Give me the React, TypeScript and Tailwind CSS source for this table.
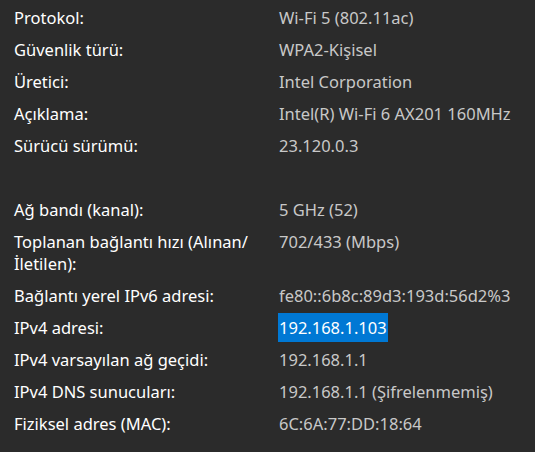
import React from "react";

type Row = { label: string[]; value?: string; selected?: boolean };

const rows: Row[] = [
  { label: ["Protokol:"], value: "Wi-Fi 5 (802.11ac)" },
  { label: ["Güvenlik türü:"], value: "WPA2-Kişisel" },
  { label: ["Üretici:"], value: "Intel Corporation" },
  { label: ["Açıklama:"], value: "Intel(R) Wi-Fi 6 AX201 160MHz" },
  { label: ["Sürücü sürümü:"], value: "23.120.0.3" },
  { label: [""] },
  { label: ["Ağ bandı (kanal):"], value: "5 GHz (52)" },
  { label: ["Toplanan bağlantı hızı (Alınan/", "İletilen):"], value: "702/433 (Mbps)" },
  { label: ["Bağlantı yerel IPv6 adresi:"], value: "fe80::6b8c:89d3:193d:56d2%3" },
  { label: ["IPv4 adresi:"], value: "192.168.1.103", selected: true },
  { label: ["IPv4 varsayılan ağ geçidi:"], value: "192.168.1.1" },
  { label: ["IPv4 DNS sunucuları:"], value: "192.168.1.1 (Şifrelenmemiş)" },
  { label: ["Fiziksel adres (MAC):"], value: "6C:6A:77:DD:18:64" },
];

export default function App() {
  return (
    <div
      className="w-[535px] h-[452px] overflow-hidden bg-[#2b2b2b] pt-[7px] pl-[14px] text-[16.5px] leading-[22px]"
      style={{ fontFamily: '"Noto Sans", "Open Sans", sans-serif' }}
    >
      <div className="flex flex-col gap-[10px]">
        {rows.map((r, i) => (
          <div key={i} className="grid grid-cols-[265px_1fr] min-h-[22px]">
            <div className="text-white whitespace-nowrap">
              {r.label.map((l, j) => (
                <div key={j}>{l}</div>
              ))}
            </div>
            <div className="text-[#c8c8c8] whitespace-nowrap">
              {r.selected ? (
                <span className="bg-[#0078d4] text-white py-[3px] -ml-px px-px">{r.value}</span>
              ) : (
                r.value
              )}
            </div>
          </div>
        ))}
      </div>
    </div>
  );
}
